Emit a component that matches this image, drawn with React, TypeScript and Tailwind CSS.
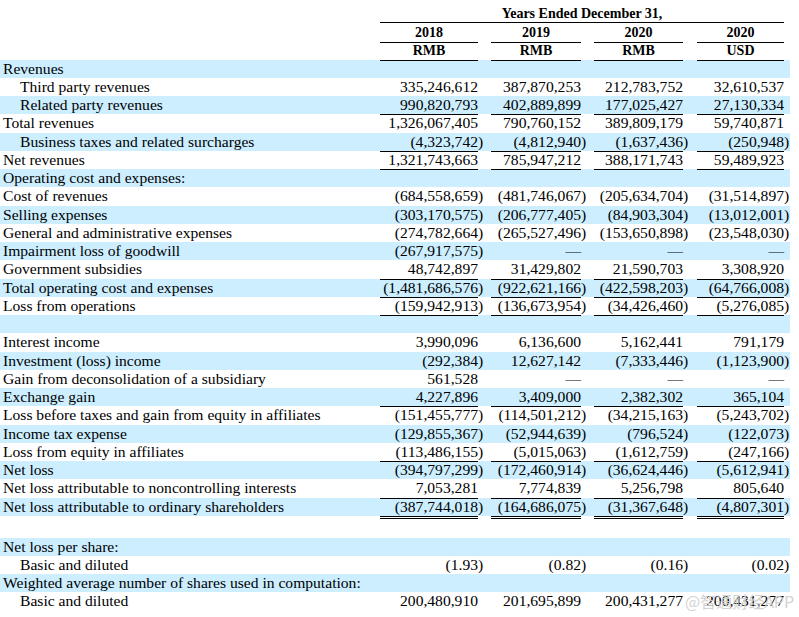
type Row = {
  label: string;
  indent?: boolean;
  values?: string[];
  line?: "single" | "double";
};

const top: Row[] = [
  { label: "Revenues" },
  { label: "Third party revenues", indent: true, values: ["335,246,612", "387,870,253", "212,783,752", "32,610,537"] },
  { label: "Related party revenues", indent: true, values: ["990,820,793", "402,889,899", "177,025,427", "27,130,334"], line: "single" },
  { label: "Total revenues", values: ["1,326,067,405", "790,760,152", "389,809,179", "59,740,871"] },
  { label: "Business taxes and related surcharges", indent: true, values: ["(4,323,742)", "(4,812,940)", "(1,637,436)", "(250,948)"], line: "single" },
  { label: "Net revenues", values: ["1,321,743,663", "785,947,212", "388,171,743", "59,489,923"], line: "single" },
  { label: "Operating cost and expenses:" },
  { label: "Cost of revenues", values: ["(684,558,659)", "(481,746,067)", "(205,634,704)", "(31,514,897)"] },
  { label: "Selling expenses", values: ["(303,170,575)", "(206,777,405)", "(84,903,304)", "(13,012,001)"] },
  { label: "General and administrative expenses", values: ["(274,782,664)", "(265,527,496)", "(153,650,898)", "(23,548,030)"] },
  { label: "Impairment loss of goodwill", values: ["(267,917,575)", "—", "—", "—"] },
  { label: "Government subsidies", values: ["48,742,897", "31,429,802", "21,590,703", "3,308,920"], line: "single" },
  { label: "Total operating cost and expenses", values: ["(1,481,686,576)", "(922,621,166)", "(422,598,203)", "(64,766,008)"], line: "single" },
  { label: "Loss from operations", values: ["(159,942,913)", "(136,673,954)", "(34,426,460)", "(5,276,085)"], line: "single" },
  { label: "" },
  { label: "Interest income", values: ["3,990,096", "6,136,600", "5,162,441", "791,179"] },
  { label: "Investment (loss) income", values: ["(292,384)", "12,627,142", "(7,333,446)", "(1,123,900)"] },
  { label: "Gain from deconsolidation of a subsidiary", values: ["561,528", "—", "—", "—"] },
  { label: "Exchange gain", values: ["4,227,896", "3,409,000", "2,382,302", "365,104"], line: "single" },
  { label: "Loss before taxes and gain from equity in affiliates", values: ["(151,455,777)", "(114,501,212)", "(34,215,163)", "(5,243,702)"] },
  { label: "Income tax expense", values: ["(129,855,367)", "(52,944,639)", "(796,524)", "(122,073)"] },
  { label: "Loss from equity in affiliates", values: ["(113,486,155)", "(5,015,063)", "(1,612,759)", "(247,166)"], line: "single" },
  { label: "Net loss", values: ["(394,797,299)", "(172,460,914)", "(36,624,446)", "(5,612,941)"] },
  { label: "Net loss attributable to noncontrolling interests", values: ["7,053,281", "7,774,839", "5,256,798", "805,640"], line: "single" },
  { label: "Net loss attributable to ordinary shareholders", values: ["(387,744,018)", "(164,686,075)", "(31,367,648)", "(4,807,301)"], line: "double" },
];

const bottom: Row[] = [
  { label: "Net loss per share:" },
  { label: "Basic and diluted", indent: true, values: ["(1.93)", "(0.82)", "(0.16)", "(0.02)"] },
  { label: "Weighted average number of shares used in computation:" },
  { label: "Basic and diluted", indent: true, values: ["200,480,910", "201,695,899", "200,431,277", "200,431,277"] },
];

const grid = "grid grid-cols-[380px_98px_13px_90px_13px_89px_14px_87px_6px] w-[790px]";
const numCols = ["col-start-2", "col-start-4", "col-start-6", "col-start-8"];

function TableRow({ row, shaded, height }: { row: Row; shaded: boolean; height: string }) {
  const lineCls =
    row.line === "single"
      ? "border-b border-black"
      : row.line === "double"
        ? "border-b-[3px] border-double border-black"
        : "";
  return (
    <div className={`${grid} ${height} ${shaded ? "bg-[#cceeff]" : ""}`}>
      <div className={`col-start-1 whitespace-nowrap ${row.indent ? "pl-[20px]" : "pl-[3px]"}`}>{row.label}</div>
      {row.values?.map((v, i) => {
        const neg = v.endsWith(")");
        return (
          <div key={i} className={`${numCols[i]} flex`}>
            <div className={`w-full text-right whitespace-nowrap ${lineCls}`}>{neg ? v.slice(0, -1) : v}</div>
            <div className="w-0 overflow-visible whitespace-nowrap">{neg ? ")" : ""}</div>
          </div>
        );
      })}
    </div>
  );
}

export default function App() {
  return (
    <div className="relative w-[799px] h-[617px] bg-white text-black font-['Liberation_Serif',serif] overflow-hidden">
      {/* header */}
      <div className="text-[14px] font-bold">
        <div className={`${grid} h-[23px]`}>
          <div className="col-start-2 col-end-9 border-b border-black text-center leading-[17px] pt-[5px]">
            Years Ended December 31,
          </div>
        </div>
        <div className={`${grid} h-[18.5px] leading-[19px]`}>
          {["2018", "2019", "2020", "2020"].map((y, i) => (
            <div key={i} className={`${numCols[i]} border-b border-black text-center`}>{y}</div>
          ))}
        </div>
        <div className={`${grid} h-[18px] leading-[18px]`}>
          {["RMB", "RMB", "RMB", "USD"].map((c, i) => (
            <div key={i} className={`${numCols[i]} border-b border-black text-center`}>{c}</div>
          ))}
        </div>
      </div>

      {/* body */}
      <div className="text-[15.6px] leading-[18.25px]">
        {top.map((r, i) => (
          <TableRow key={i} row={r} shaded={i % 2 === 0} height="h-[18.25px]" />
        ))}
        <div className="h-[22px]" />
        {bottom.map((r, i) => (
          <TableRow key={i} row={r} shaded={i % 2 === 0} height="h-[18px]" />
        ))}
      </div>

      {/* watermark */}
      <div className="absolute left-[685px] top-[591px] text-[16px] leading-[20px] text-[#cfcfcf] opacity-90 font-['Noto_Sans_CJK_SC',sans-serif] whitespace-nowrap">
        @智通财经APP
      </div>
    </div>
  );
}
